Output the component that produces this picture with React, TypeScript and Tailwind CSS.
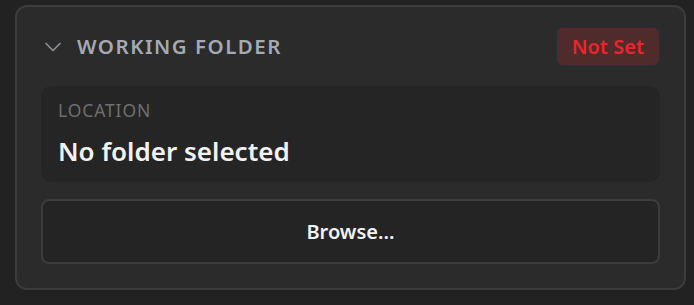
import React from 'react';
import { ChevronDown } from 'lucide-react';

const App: React.FC = () => {
  return (
    <div className="min-h-[305px] w-[694px] bg-[#222222] p-[5px_8px_15px_15px] font-['Noto_Sans',sans-serif]">
      <div className="rounded-[12px] border-2 border-[#3c3c3c] bg-[#2b2b2b] px-[24px] pt-[20px] pb-[24px]">
        {/* Header */}
        <div className="flex items-center justify-between">
          <div className="flex items-center">
            <ChevronDown className="-ml-[2px] h-[28px] w-[28px] text-[#8a8f96]" strokeWidth={1.5} />
            <h2 className="ml-[10px] text-[20.5px] font-semibold uppercase tracking-[1.5px] text-[#a3aab3]">
              Working Folder
            </h2>
          </div>
          <span className="flex h-[39px] items-center rounded-[7px] border border-[#1e3434] bg-[#4f2b2b] px-[15px] text-[20px] font-semibold text-[#e8262b]">
            Not Set
          </span>
        </div>

        {/* Location */}
        <div className="mt-[20px] rounded-[10px] bg-[#252525] px-[17px] pt-[10.5px] pb-[15px]">
          <div className="text-[17.5px] uppercase tracking-[0.05em] text-[#6e6e6e]">Location</div>
          <div className="mt-[12px] text-[26px] font-semibold leading-tight text-[#f2f2f2]">No folder selected</div>
        </div>

        {/* Browse */}
        <button className="mt-[17px] flex h-[65px] w-full items-center justify-center rounded-[8px] border-2 border-[#3c3c3c] bg-[#242424] text-[20px] font-semibold text-[#f2f2f2]">
          Browse...
        </button>
      </div>
    </div>
  );
};

export default App;
